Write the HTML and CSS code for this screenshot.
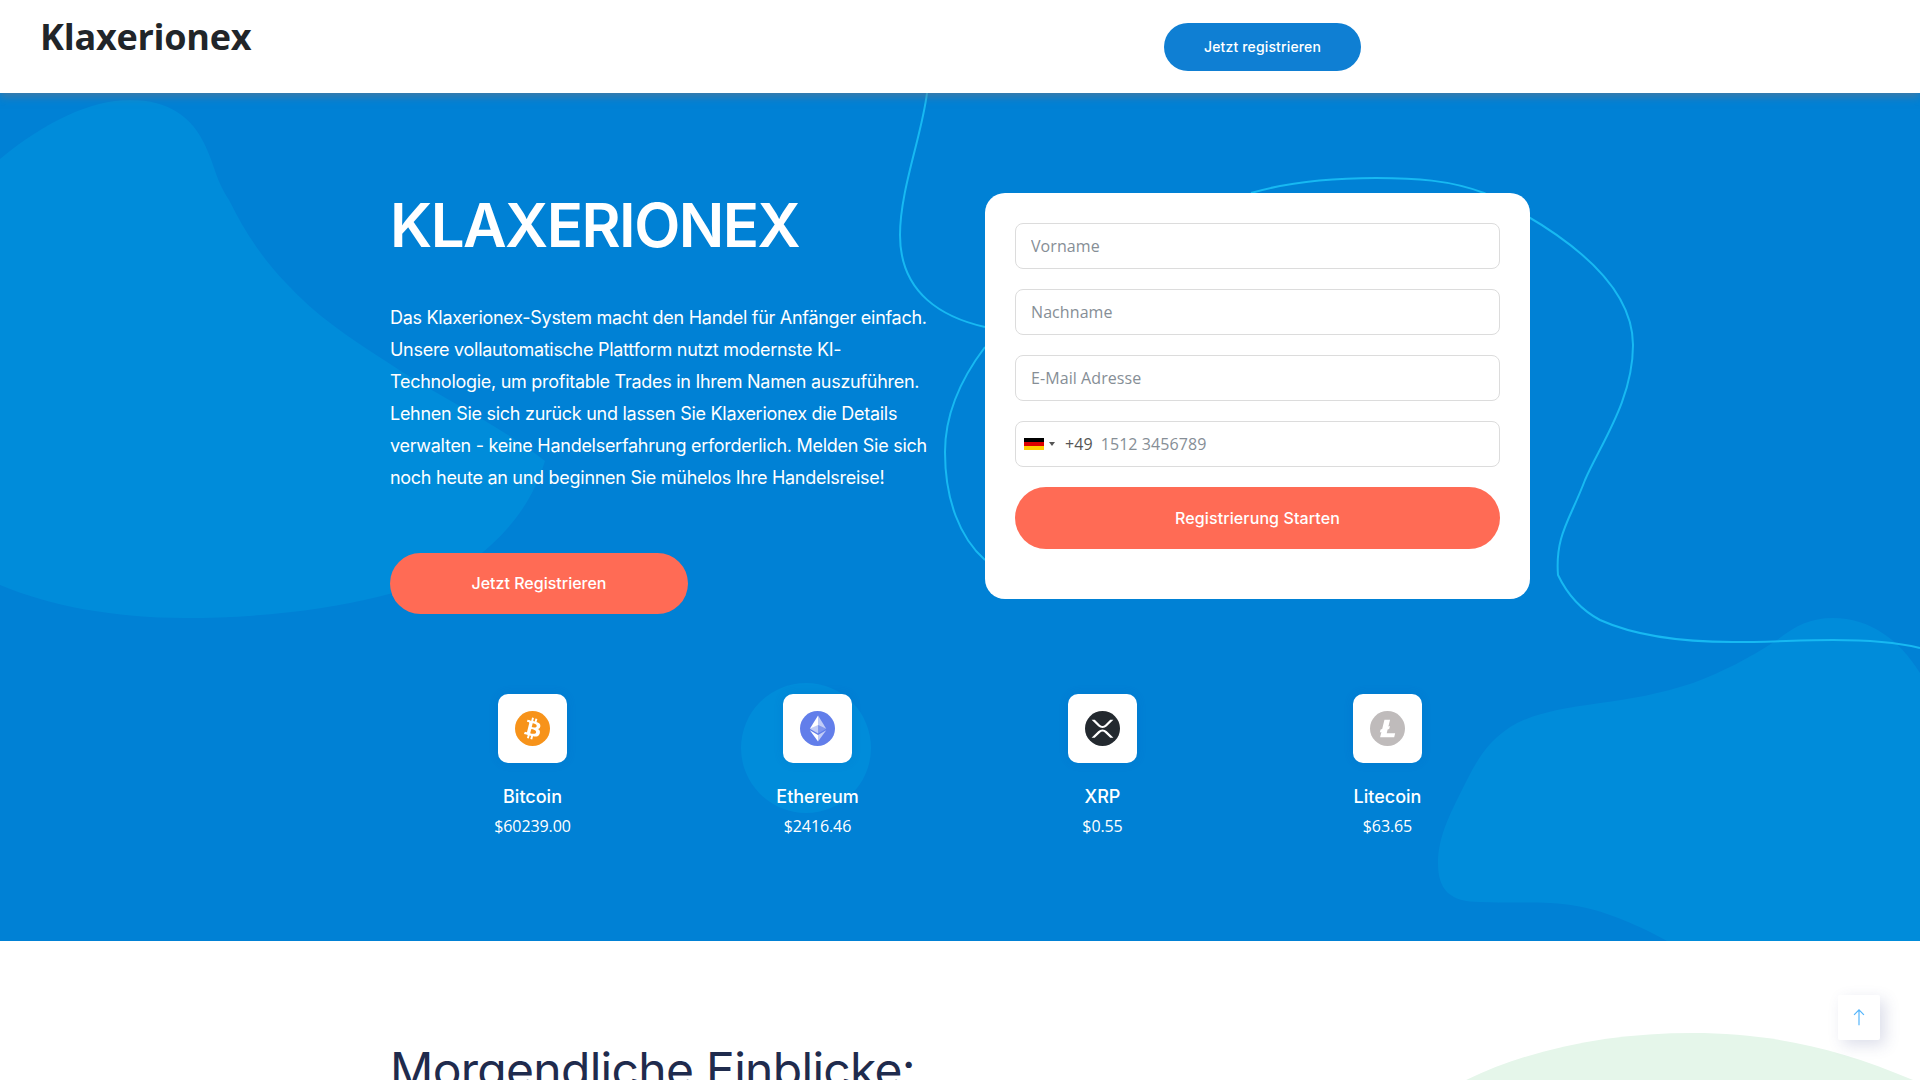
FILE: index.html
```html
<!DOCTYPE html>
<html lang="de">
<head>
    <meta charset="UTF-8">
    <meta name="viewport" content="width=device-width, initial-scale=1.0">
    <title>Klaxerionex</title>
    <link rel="stylesheet" href="styles.css">
</head>
<body>
<div class="page">
    <header class="site-header">
        <a class="logo" href="#">Klaxerionex</a>
        <a class="nav-cta" href="#">Jetzt registrieren</a>
    </header>

    <section class="hero">
        <!-- background shapes -->
        <svg class="hero-shapes" viewBox="0 93 1920 848" aria-hidden="true">
            <path class="blob" d="M0 159C45 122 90 100 130 100C170 100 192 118 204 143C216 168 215 178 229 200C245 232 262 258 286 283C315 315 350 338 384 360C440 398 500 425 545 461C530 510 500 540 470 562C410 598 300 618 184 618C115 618 50 606 0 585Z"/>
            <path class="blob" d="M1920 673C1900 640 1870 618 1833 618C1810 618 1795 626 1777 640C1750 658 1722 672 1693 683C1660 694 1630 699 1600 703C1565 708 1540 712 1517 723C1490 738 1478 758 1467 780C1452 810 1438 835 1438 863C1438 890 1450 902 1480 902C1505 903 1530 902 1550 903C1590 905 1625 918 1667 941L1920 941Z"/>
            <circle class="blob" cx="806" cy="748" r="65"/>
            <path class="wave" d="M927 93C922 135 900 190 900 235C900 295 945 318 985 327"/>
            <path class="wave" d="M985 347C960 380 945 415 945 452C945 500 960 538 985 560"/>
            <path class="wave" d="M1251 193C1292 181 1335 178 1376 178C1415 178 1450 180 1484 193C1580 240 1633 290 1633 345C1633 400 1600 445 1585 480C1570 520 1555 535 1558 575C1570 600 1585 612 1600 620C1640 638 1690 642 1733 642C1770 642 1800 640 1833 640C1865 640 1895 642 1920 648"/>
        </svg>

        <div class="hero-inner">
            <div class="hero-main">
                <div class="hero-copy">
                    <h1>KLAXERIONEX</h1>
                    <p>Das Klaxerionex-System macht den Handel für Anfänger einfach. Unsere vollautomatische Plattform nutzt modernste KI-Technologie, um profitable Trades in Ihrem Namen auszuführen. Lehnen Sie sich zurück und lassen Sie Klaxerionex die Details verwalten - keine Handelserfahrung erforderlich. Melden Sie sich noch heute an und beginnen Sie mühelos Ihre Handelsreise!</p>
                    <a class="btn-coral btn-hero" href="#">Jetzt Registrieren</a>
                </div>

                <form class="signup-card">
                    <input class="field" type="text" placeholder="Vorname">
                    <input class="field" type="text" placeholder="Nachname">
                    <input class="field" type="email" placeholder="E-Mail Adresse">
                    <div class="field phone-field">
                        <svg class="flag" viewBox="0 0 20 12" aria-hidden="true">
                            <rect width="20" height="4" fill="#000"/>
                            <rect y="4" width="20" height="4" fill="#d00"/>
                            <rect y="8" width="20" height="4" fill="#ffce00"/>
                        </svg>
                        <span class="flag-caret"></span>
                        <span class="dial-code">+49</span>
                        <input type="tel" placeholder="1512 3456789">
                    </div>
                    <button class="btn-coral btn-submit" type="button">Registrierung Starten</button>
                </form>
            </div>

            <div class="coin-row">
                <div class="coin">
                    <div class="coin-tile">
                        <svg viewBox="0 0 32 32"><circle cx="16" cy="16" r="16" fill="#f7931a"/><path fill="#fff" d="M23.189 14.02c.314-2.096-1.283-3.223-3.465-3.975l.708-2.84-1.728-.43-.69 2.765c-.454-.114-.92-.22-1.385-.326l.695-2.783L15.596 6l-.708 2.839c-.376-.086-.746-.17-1.104-.26l.002-.009-2.384-.595-.46 1.846s1.283.294 1.256.312c.7.175.826.638.805 1.006l-.806 3.235c.048.012.11.03.18.057l-.183-.045-1.13 4.532c-.086.212-.303.531-.793.41.018.025-1.256-.313-1.256-.313l-.858 1.978 2.25.561c.418.105.828.215 1.231.318l-.715 2.872 1.727.43.708-2.84c.472.127.93.245 1.378.357l-.706 2.828 1.728.43.715-2.866c2.948.558 5.164.333 6.097-2.333.752-2.146-.037-3.385-1.588-4.192 1.13-.26 1.98-1.003 2.207-2.538zm-3.95 5.538c-.533 2.147-4.148.986-5.32.695l.95-3.805c1.172.293 4.929.872 4.37 3.11zm.535-5.569c-.487 1.953-3.495.96-4.47.717l.86-3.45c.975.243 4.118.696 3.61 2.733z"/></svg>
                    </div>
                    <h3>Bitcoin</h3>
                    <span class="price">$60239.00</span>
                </div>
                <div class="coin">
                    <div class="coin-tile">
                        <svg viewBox="0 0 32 32"><circle cx="16" cy="16" r="16" fill="#627eea"/><g fill="#fff"><path fill-opacity=".602" d="M16.498 4v8.87l7.497 3.35z"/><path d="M16.498 4L9 16.22l7.498-3.35z"/><path fill-opacity=".602" d="M16.498 21.968v6.027L24 17.616z"/><path d="M16.498 27.995v-6.028L9 17.616z"/><path fill-opacity=".2" d="M16.498 20.573l7.497-4.353-7.497-3.348z"/><path fill-opacity=".602" d="M9 16.22l7.498 4.353v-8.701z"/></g></svg>
                    </div>
                    <h3>Ethereum</h3>
                    <span class="price">$2416.46</span>
                </div>
                <div class="coin">
                    <div class="coin-tile">
                        <svg viewBox="0 0 32 32"><circle cx="16" cy="16" r="16" fill="#23292f"/><path fill="#fff" d="M23.07 8h2.89l-6.015 5.957a5.621 5.621 0 01-7.89 0L6.035 8H8.93l4.57 4.523a3.556 3.556 0 004.996 0L23.07 8zM8.895 24.563H6l6.055-5.993a5.621 5.621 0 017.89 0L26 24.562h-2.895L18.5 20a3.556 3.556 0 00-4.996 0l-4.61 4.563z"/></svg>
                    </div>
                    <h3>XRP</h3>
                    <span class="price">$0.55</span>
                </div>
                <div class="coin">
                    <div class="coin-tile">
                        <svg viewBox="0 0 32 32"><circle cx="16" cy="16" r="16" fill="#bfbbbb"/><path fill="#fff" d="M10.427 19.214L9 19.768l.688-2.759 1.444-.58L13.213 8h5.129l-1.519 6.196 1.41-.571-.68 2.75-1.427.571-.848 3.483H23L22.127 24H9.252z"/></svg>
                    </div>
                    <h3>Litecoin</h3>
                    <span class="price">$63.65</span>
                </div>
            </div>
        </div>
    </section>

    <section class="insights">
        <svg class="insights-blob" viewBox="0 0 460 50" aria-hidden="true">
            <path d="M0 50C70 15 150 0 233 0C310 0 380 15 460 50Z"/>
        </svg>
        <h2>Morgendliche Einblicke:</h2>
    </section>
</div>

<a class="scroll-top" href="#" aria-label="Nach oben">
    <svg viewBox="0 0 14 20" aria-hidden="true"><path d="M7 19V1M1.2 7 7 1l5.8 6"/></svg>
</a>
</body>
</html>
```
FILE: styles.css
```css
* {
    box-sizing: border-box;
}
body {
    margin: 0;
    font-family: "Inter", "Open Sans", sans-serif;
    background-color: #ffffff;
}
.page {
    height: 100vh;
    overflow: hidden;
}
a {
    text-decoration: none;
}

/* header */
.site-header {
    position: relative;
    z-index: 2;
    display: flex;
    align-items: flex-start;
    height: 93px;
    padding-left: 40px;
    background-color: #ffffff;
    box-shadow: 0 4px 8px rgba(120, 115, 125, 0.5);
}
.logo {
    margin-top: 12px;
    font-family: "Open Sans", sans-serif;
    font-size: 36px;
    font-weight: 700;
    line-height: 49px;
    letter-spacing: -0.25px;
    color: #212529;
}
.nav-cta {
    display: flex;
    align-items: center;
    justify-content: center;
    width: 197px;
    height: 48px;
    margin: 23px 559px 0 auto;
    padding-bottom: 1px;
    border-radius: 24px;
    background-color: #0f7fd3;
    color: #ffffff;
    font-size: 14px;
    font-weight: 500;
    letter-spacing: 0.15px;
}

/* hero */
.hero {
    position: relative;
    height: 848px;
    background-color: #0081d5;
}
.hero-shapes {
    position: absolute;
    top: 0;
    left: 0;
    width: 1920px;
    height: 848px;
}
.blob {
    fill: #008cda;
}
.wave {
    fill: none;
    stroke: #17b9f2;
    stroke-width: 2;
}
.hero-inner {
    position: relative;
    width: 1140px;
    margin: 0 auto;
    padding-top: 100px;
}
.hero-main {
    display: flex;
    justify-content: space-between;
    align-items: flex-start;
}
.hero-copy {
    width: 545px;
}
.hero-copy h1 {
    margin: 0;
    font-size: 60px;
    font-weight: 600;
    line-height: 64px;
    letter-spacing: -1.55px;
    color: #ffffff;
}
.hero-copy p {
    margin: 45px 0 59px;
    font-size: 18px;
    line-height: 32px;
    letter-spacing: -0.28px;
    color: #ffffff;
}
.btn-coral {
    display: flex;
    align-items: center;
    justify-content: center;
    padding-bottom: 2px;
    border: none;
    background-color: #ff6b55;
    color: #ffffff;
    font-family: inherit;
    font-size: 16px;
    font-weight: 500;
}
.btn-hero {
    width: 298px;
    height: 61px;
    border-radius: 31px;
}

/* form card */
.signup-card {
    display: flex;
    flex-direction: column;
    gap: 20px;
    width: 545px;
    height: 406px;
    padding: 30px;
    border-radius: 20px;
    background-color: #ffffff;
}
.field {
    width: 100%;
    height: 46px;
    padding: 0 15px;
    border: 1px solid #dcdcdc;
    border-radius: 8px;
    background-color: #ffffff;
    font-family: "Open Sans", sans-serif;
    font-size: 16px;
    letter-spacing: 0.08px;
    color: #495057;
}
.field::placeholder,
.phone-field input::placeholder {
    color: #868e96;
}
.phone-field {
    display: flex;
    align-items: center;
    padding-left: 8px;
}
.flag {
    width: 20px;
    height: 12px;
}
.flag-caret {
    width: 0;
    height: 0;
    margin-left: 5px;
    border-top: 4px solid #555555;
    border-left: 3px solid transparent;
    border-right: 3px solid transparent;
}
.dial-code {
    margin-left: 10px;
    color: #555555;
}
.phone-field input {
    flex: 1;
    min-width: 0;
    margin-left: 8px;
    padding: 0;
    border: none;
    outline: none;
    font: inherit;
    letter-spacing: inherit;
}
.btn-submit {
    width: 100%;
    height: 62px;
    border-radius: 31px;
    letter-spacing: 0.1px;
}

/* coins */
.coin-row {
    display: grid;
    grid-template-columns: repeat(4, 1fr);
    margin-top: 80px;
}
.coin {
    display: flex;
    flex-direction: column;
    align-items: center;
    color: #ffffff;
}
.coin-tile {
    display: flex;
    align-items: center;
    justify-content: center;
    width: 69px;
    height: 69px;
    border-radius: 10px;
    background-color: #ffffff;
    box-shadow: 0 0 10px rgba(0, 90, 180, 0.15);
}
.coin-tile svg {
    width: 35px;
    height: 35px;
}
.coin h3 {
    margin: 22px 0 0;
    font-size: 18px;
    font-weight: 500;
    line-height: 24px;
}
.price {
    margin-top: 5px;
    font-family: "Open Sans", sans-serif;
    font-size: 16px;
    line-height: 24px;
    letter-spacing: -0.1px;
}

/* next section */
.insights {
    position: relative;
    padding: 98px 0 0 390px;
}
.insights h2 {
    margin: 0;
    font-size: 48px;
    font-weight: 400;
    line-height: 62px;
    letter-spacing: -0.7px;
    color: #1f2b4d;
}
.insights-blob {
    position: absolute;
    top: 92px;
    left: 1460px;
    width: 460px;
    height: 50px;
    fill: #e5f6ea;
}

/* scroll to top */
.scroll-top {
    position: fixed;
    top: 995px;
    left: 1838px;
    display: flex;
    align-items: center;
    justify-content: center;
    width: 42px;
    height: 45px;
    border-radius: 2px;
    background-color: #ffffff;
    box-shadow: 5px 5px 15px rgba(60, 70, 140, 0.18);
}
.scroll-top svg {
    width: 12px;
    height: 17px;
    fill: none;
    stroke: #54b5fb;
    stroke-width: 1.4;
}
```
